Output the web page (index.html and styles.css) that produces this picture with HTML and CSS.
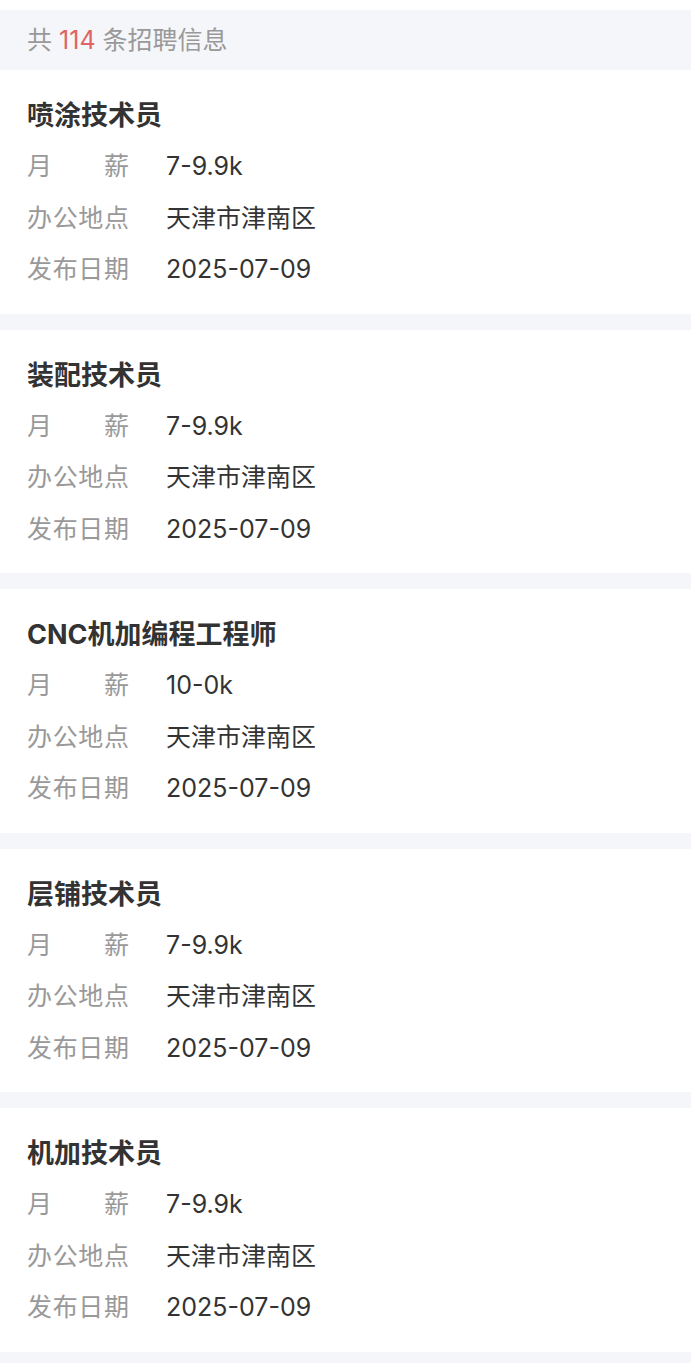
FILE: index.html
```html
<!DOCTYPE html>
<html lang="zh-CN">
<head>
    <meta charset="UTF-8">
    <meta name="viewport" content="width=device-width, initial-scale=1.0">
    <title>招聘信息</title>
    <link rel="stylesheet" href="styles.css">
</head>
<body>
    <div class="page">
        <div class="summary">共 <span class="count">114</span> 条招聘信息</div>
        <div class="job-list" id="jobList"></div>
    </div>

    <script>
        const jobs = [
            { title: "喷涂技术员", salary: "7-9.9k", place: "天津市津南区", date: "2025-07-09" },
            { title: "装配技术员", salary: "7-9.9k", place: "天津市津南区", date: "2025-07-09" },
            { title: "CNC机加编程工程师", salary: "10-0k", place: "天津市津南区", date: "2025-07-09" },
            { title: "层铺技术员", salary: "7-9.9k", place: "天津市津南区", date: "2025-07-09" },
            { title: "机加技术员", salary: "7-9.9k", place: "天津市津南区", date: "2025-07-09" }
        ];

        const jobList = document.getElementById("jobList");

        jobs.forEach((job) => {
            const card = document.createElement("div");
            card.className = "job-card";
            card.innerHTML = `
                <div class="job-title">${job.title}</div>
                <div class="job-row"><span class="label">月薪</span><span class="value">${job.salary}</span></div>
                <div class="job-row"><span class="label">办公地点</span><span class="value">${job.place}</span></div>
                <div class="job-row"><span class="label">发布日期</span><span class="value">${job.date}</span></div>`;
            jobList.appendChild(card);
        });
    </script>
</body>
</html>
```

FILE: styles.css
```css
body {
    margin: 0;
    font-family: "Inter", "Noto Sans CJK SC", "Noto Sans", sans-serif;
    background: #ffffff;
    color: #333333;
}
.page {
    padding-top: 10px;
}
.summary {
    height: 60px;
    line-height: 60px;
    padding-left: 27px;
    font-size: 25px;
    color: #999999;
    background: #f5f6fa;
}
.count {
    color: #e06464;
}
.job-list {
    display: flex;
    flex-direction: column;
    gap: 16px;
    padding-bottom: 16px;
    background: #f5f6fa;
}
.job-card {
    background: #ffffff;
    padding: 24px 27px 18px 27px;
}
.job-title {
    font-size: 27px;
    font-weight: bold;
    line-height: 44px;
    color: #333333;
}
.job-row {
    display: flex;
    line-height: 51.5px;
    font-size: 25px;
}
.job-title + .job-row {
    margin-top: 3px;
}
.label {
    width: 102px;
    margin-right: 37px;
    color: #999999;
    text-align: justify;
    text-align-last: justify;
}
.value {
    color: #333333;
}
```
